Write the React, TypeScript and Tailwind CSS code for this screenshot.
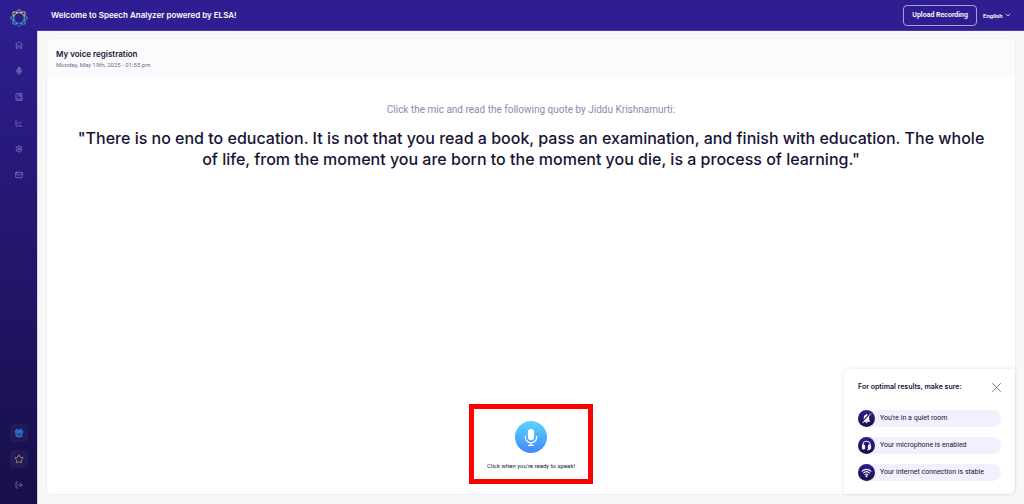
import React, { useState } from 'react';
import { ChartLine, ChevronDown, Gift, LogOut, Mail, Settings, Star } from 'lucide-react';

const navItems = [
  { label: 'Home', icon: <HomeIcon /> },
  { label: 'Record', icon: <NavMicIcon /> },
  { label: 'Library', icon: <BookIcon /> },
  { label: 'Progress', icon: <ChartLine className="size-2" /> },
  { label: 'Settings', icon: <Settings className="size-2" /> },
  { label: 'Messages', icon: <Mail className="size-2" /> },
];

const tips = [
  { text: "You're in a quiet room", icon: <QuietIcon /> },
  { text: 'Your microphone is enabled', icon: <HeadphonesIcon /> },
  { text: 'Your internet connection is stable', icon: <WifiIcon /> },
];

function Logo() {
  const petals = [0, 45, 90, 135, 180, 225, 270, 315];
  const colors = ['#e8d86a', '#b5d68a', '#5fd3a0', '#2fb4c4', '#2299d6', '#2fb4c4', '#5fd3a0', '#b5d68a'];
  return (
    <svg viewBox="-20 -20 40 40" className="size-[18px]" fill="none" strokeWidth="2" strokeLinejoin="round">
      {petals.map((angle, i) => (
        <path
          key={angle}
          d="M0 -19 L5 -14 L4.500 -11 Q0 -13 -4.500 -11 L-5 -14 Z"
          stroke={colors[i]}
          transform={`rotate(${angle})`}
        />
      ))}
    </svg>
  );
}

function HomeIcon() {
  return (
    <svg viewBox="0 0 24 24" className="size-2" fill="none" stroke="currentColor" strokeWidth="2" strokeLinejoin="round">
      <path d="M1 11L12 2l11 9M4 9v13h5v-6a3 3 0 0 1 6 0v6h5V9" />
    </svg>
  );
}

function NavMicIcon() {
  return (
    <svg viewBox="0 0 24 24" className="size-2" fill="none" stroke="currentColor" strokeWidth="2" strokeLinecap="round">
      <rect x="8.500" y="1" width="7" height="14" rx="3.500" fill="currentColor" fillOpacity="0.5" />
      <path d="M5 10v2a7 7 0 0 0 14 0v-2M12 19v4" />
    </svg>
  );
}

function BookIcon() {
  return (
    <svg viewBox="0 0 24 24" className="size-2" fill="none" stroke="currentColor" strokeWidth="2">
      <path d="M3 4a2 2 0 0 1 2-2h16v20H5a2 2 0 0 1-2-2z" />
      <path d="M3 18h18M11 2v9l3-2.5 3 2.5V2" />
    </svg>
  );
}

function QuietIcon() {
  return (
    <svg viewBox="0 0 24 24" className="size-[11px]">
      <path d="M12 2a1.6 1.6 0 0 0-1.6 1.7C7.500 4.500 6 7 6 10v5l-2 3v1h16v-1l-2-3v-5c0-3-1.500-5.500-4.400-6.300A1.600 1.600 0 0 0 12 2zM9.500 20a2.500 2.500 0 0 0 5 0z" fill="#fff" />
      <path d="M19 1.500L2.500 20" stroke="#21166f" strokeWidth="3" />
      <path d="M21 2L4 21.500" stroke="#fff" strokeWidth="2" strokeLinecap="round" />
    </svg>
  );
}

function HeadphonesIcon() {
  return (
    <svg viewBox="0 0 24 24" className="size-[11px]" fill="none" stroke="#fff" strokeWidth="2" strokeLinecap="round">
      <path d="M3.500 14v-3a8.500 8.500 0 0 1 17 0v3M20 17c0 3-2.500 4.500-6 4.500" />
      <rect x="3" y="11" width="5" height="9" rx="2" fill="#fff" />
      <rect x="16" y="11" width="5" height="9" rx="2" fill="#fff" />
    </svg>
  );
}

function WifiIcon() {
  return (
    <svg viewBox="0 0 24 24" className="size-[11px]" fill="none" stroke="#fff" strokeWidth="2.400" strokeLinecap="round">
      <path d="M2.500 9a14 14 0 0 1 19 0M5.800 13a9 9 0 0 1 12.400 0M9 16.700a4.500 4.500 0 0 1 6 0" />
      <circle cx="12" cy="20" r="1" fill="#fff" />
    </svg>
  );
}

function CloseIcon() {
  return (
    <svg viewBox="0 0 9 9" className="size-[9px]" fill="none" stroke="currentColor" strokeLinecap="round">
      <path d="M0.500 0.500l8 8M8.500 0.500l-8 8" />
    </svg>
  );
}

function MicIcon() {
  return (
    <svg viewBox="0 0 24 32" className="h-5 w-4" fill="none" stroke="#fff" strokeWidth="2" strokeLinecap="round">
      <rect x="7" y="3" width="10" height="18" rx="5" fill="#fff" stroke="none" />
      <path d="M3 15v1.500a9 9 0 0 0 18 0V15M12 26v3M8 29.500h8" />
    </svg>
  );
}

const Sidebar: React.FC = () => (
  <aside className="flex w-[37px] shrink-0 flex-col items-center bg-linear-to-b from-[#2e1e92] to-[#170f49] pt-[9px] pb-[10px]">
    <a href="#home" aria-label="Speech Analyzer">
      <Logo />
    </a>
    <nav className="mt-[9px] flex flex-col items-center gap-[9px] text-[#9089c9]">
      {navItems.map((item) => (
        <a key={item.label} href="#nav" aria-label={item.label} className="grid size-[17px] place-items-center">
          {item.icon}
        </a>
      ))}
    </nav>
    <div className="mt-auto flex flex-col items-center gap-2">
      <button aria-label="Rewards" className="grid size-[18px] place-items-center rounded bg-[#231a5a] text-[#2f86dc]">
        <Gift className="size-[10px]" fill="#1d4f9f" />
      </button>
      <button aria-label="Upgrade" className="grid size-[18px] place-items-center rounded bg-[#231a5a] text-[#b8965a]">
        <Star className="size-[10px]" />
      </button>
      <button aria-label="Log out" className="grid size-[18px] place-items-center text-[#9089c9]">
        <LogOut className="size-2" />
      </button>
    </div>
  </aside>
);

const TopBar: React.FC = () => (
  <header className="flex h-[31px] shrink-0 items-center justify-between border-b border-[#4a3ba6] bg-[#2e1e92] pr-3 pl-[14px] text-white">
    <p className="font-[Inter,sans-serif] text-[8px] font-semibold">Welcome to Speech Analyzer powered by ELSA!</p>
    <div className="flex items-center gap-[6px]">
      <button className="h-[21px] rounded border border-[#a9a2d8] px-2 text-[7px] font-semibold">
        Upload Recording
      </button>
      <div className="relative flex items-center">
        <select aria-label="Language" className="w-[29px] appearance-none bg-transparent text-[6px] font-semibold outline-none">
          <option>English</option>
        </select>
        <ChevronDown className="pointer-events-none absolute right-0 size-2" />
      </div>
    </div>
  </header>
);

const TipsPanel: React.FC<{ onClose: () => void }> = ({ onClose }) => (
  <section className="absolute right-0 bottom-0 w-[171px] rounded-tl-md rounded-br-md bg-white px-[14px] pt-3 pb-[13px] shadow-[0_0_4px_rgba(30,30,60,0.12)]">
    <div className="flex h-3 items-center justify-between">
      <h2 className="font-[Inter,sans-serif] text-[7px] font-semibold">For optimal results, make sure:</h2>
      <button onClick={onClose} aria-label="Close" className="text-[#7d7ba3]">
        <CloseIcon />
      </button>
    </div>
    <ul className="mt-[17px] flex flex-col gap-[10px]">
      {tips.map((tip) => (
        <li key={tip.text} className="flex h-[17px] items-center gap-[5px] rounded-full bg-[#f2efff]">
          <span className="grid size-[17px] place-items-center rounded-full bg-linear-to-b from-[#2e1e92] to-[#170f49]">
            {tip.icon}
          </span>
          <span className="text-[7px]">{tip.text}</span>
        </li>
      ))}
    </ul>
  </section>
);

const App: React.FC = () => {
  const [showTips, setShowTips] = useState(true);
  const [recording, setRecording] = useState(false);

  return (
    <div className="flex min-h-screen font-[Roboto,sans-serif] text-[#171336]">
      <Sidebar />
      <div className="flex min-w-0 flex-1 flex-col">
        <TopBar />
        <div className="flex flex-1 border-l border-[#d5d3e6] bg-[#f7f8fa] px-2 pt-[7px] pb-[9px]">
          <main className="relative flex flex-1 flex-col rounded-md border border-[#f0f1f4] bg-white">
            {/* Session title */}
            <div className="rounded-t-md bg-[#fbfbfd] px-[9px] pt-[9px] pb-[7px]">
              <h1 className="font-[Inter,sans-serif] text-[8px] leading-3 font-semibold">My voice registration</h1>
              <p className="text-[6px] leading-[10px] text-[#6d6b85]">Monday, May 19th, 2025 - 01:55 pm</p>
            </div>

            {/* Quote to read */}
            <div className="px-6 pt-[25px] text-center">
              <p className="text-[10px] leading-4 text-[#8d8aae]">
                Click the mic and read the following quote by Jiddu Krishnamurti:
              </p>
              <blockquote className="mt-[10px] font-[Inter,sans-serif] text-[16px] leading-[21px] font-medium">
                "There is no end to education. It is not that you read a book, pass an examination, and finish with
                education. The whole of life, from the moment you are born to the moment you die, is a process of
                learning."
              </blockquote>
            </div>

            {/* Recorder */}
            <div className="mx-auto mt-auto mb-[10px] flex h-20 w-[124px] flex-col items-center border-5 border-[#ff0000] pt-3">
              <button
                onClick={() => setRecording(!recording)}
                aria-pressed={recording}
                aria-label="Record"
                className="grid size-8 place-items-center rounded-full bg-linear-to-b from-[#5fd3fc] to-[#4388f8]"
              >
                <MicIcon />
              </button>
              <p className="mt-2 text-[6px] leading-[10px]">Click when you're ready to speak!</p>
            </div>

            {showTips && <TipsPanel onClose={() => setShowTips(false)} />}
          </main>
        </div>
      </div>
    </div>
  );
};

export default App;
